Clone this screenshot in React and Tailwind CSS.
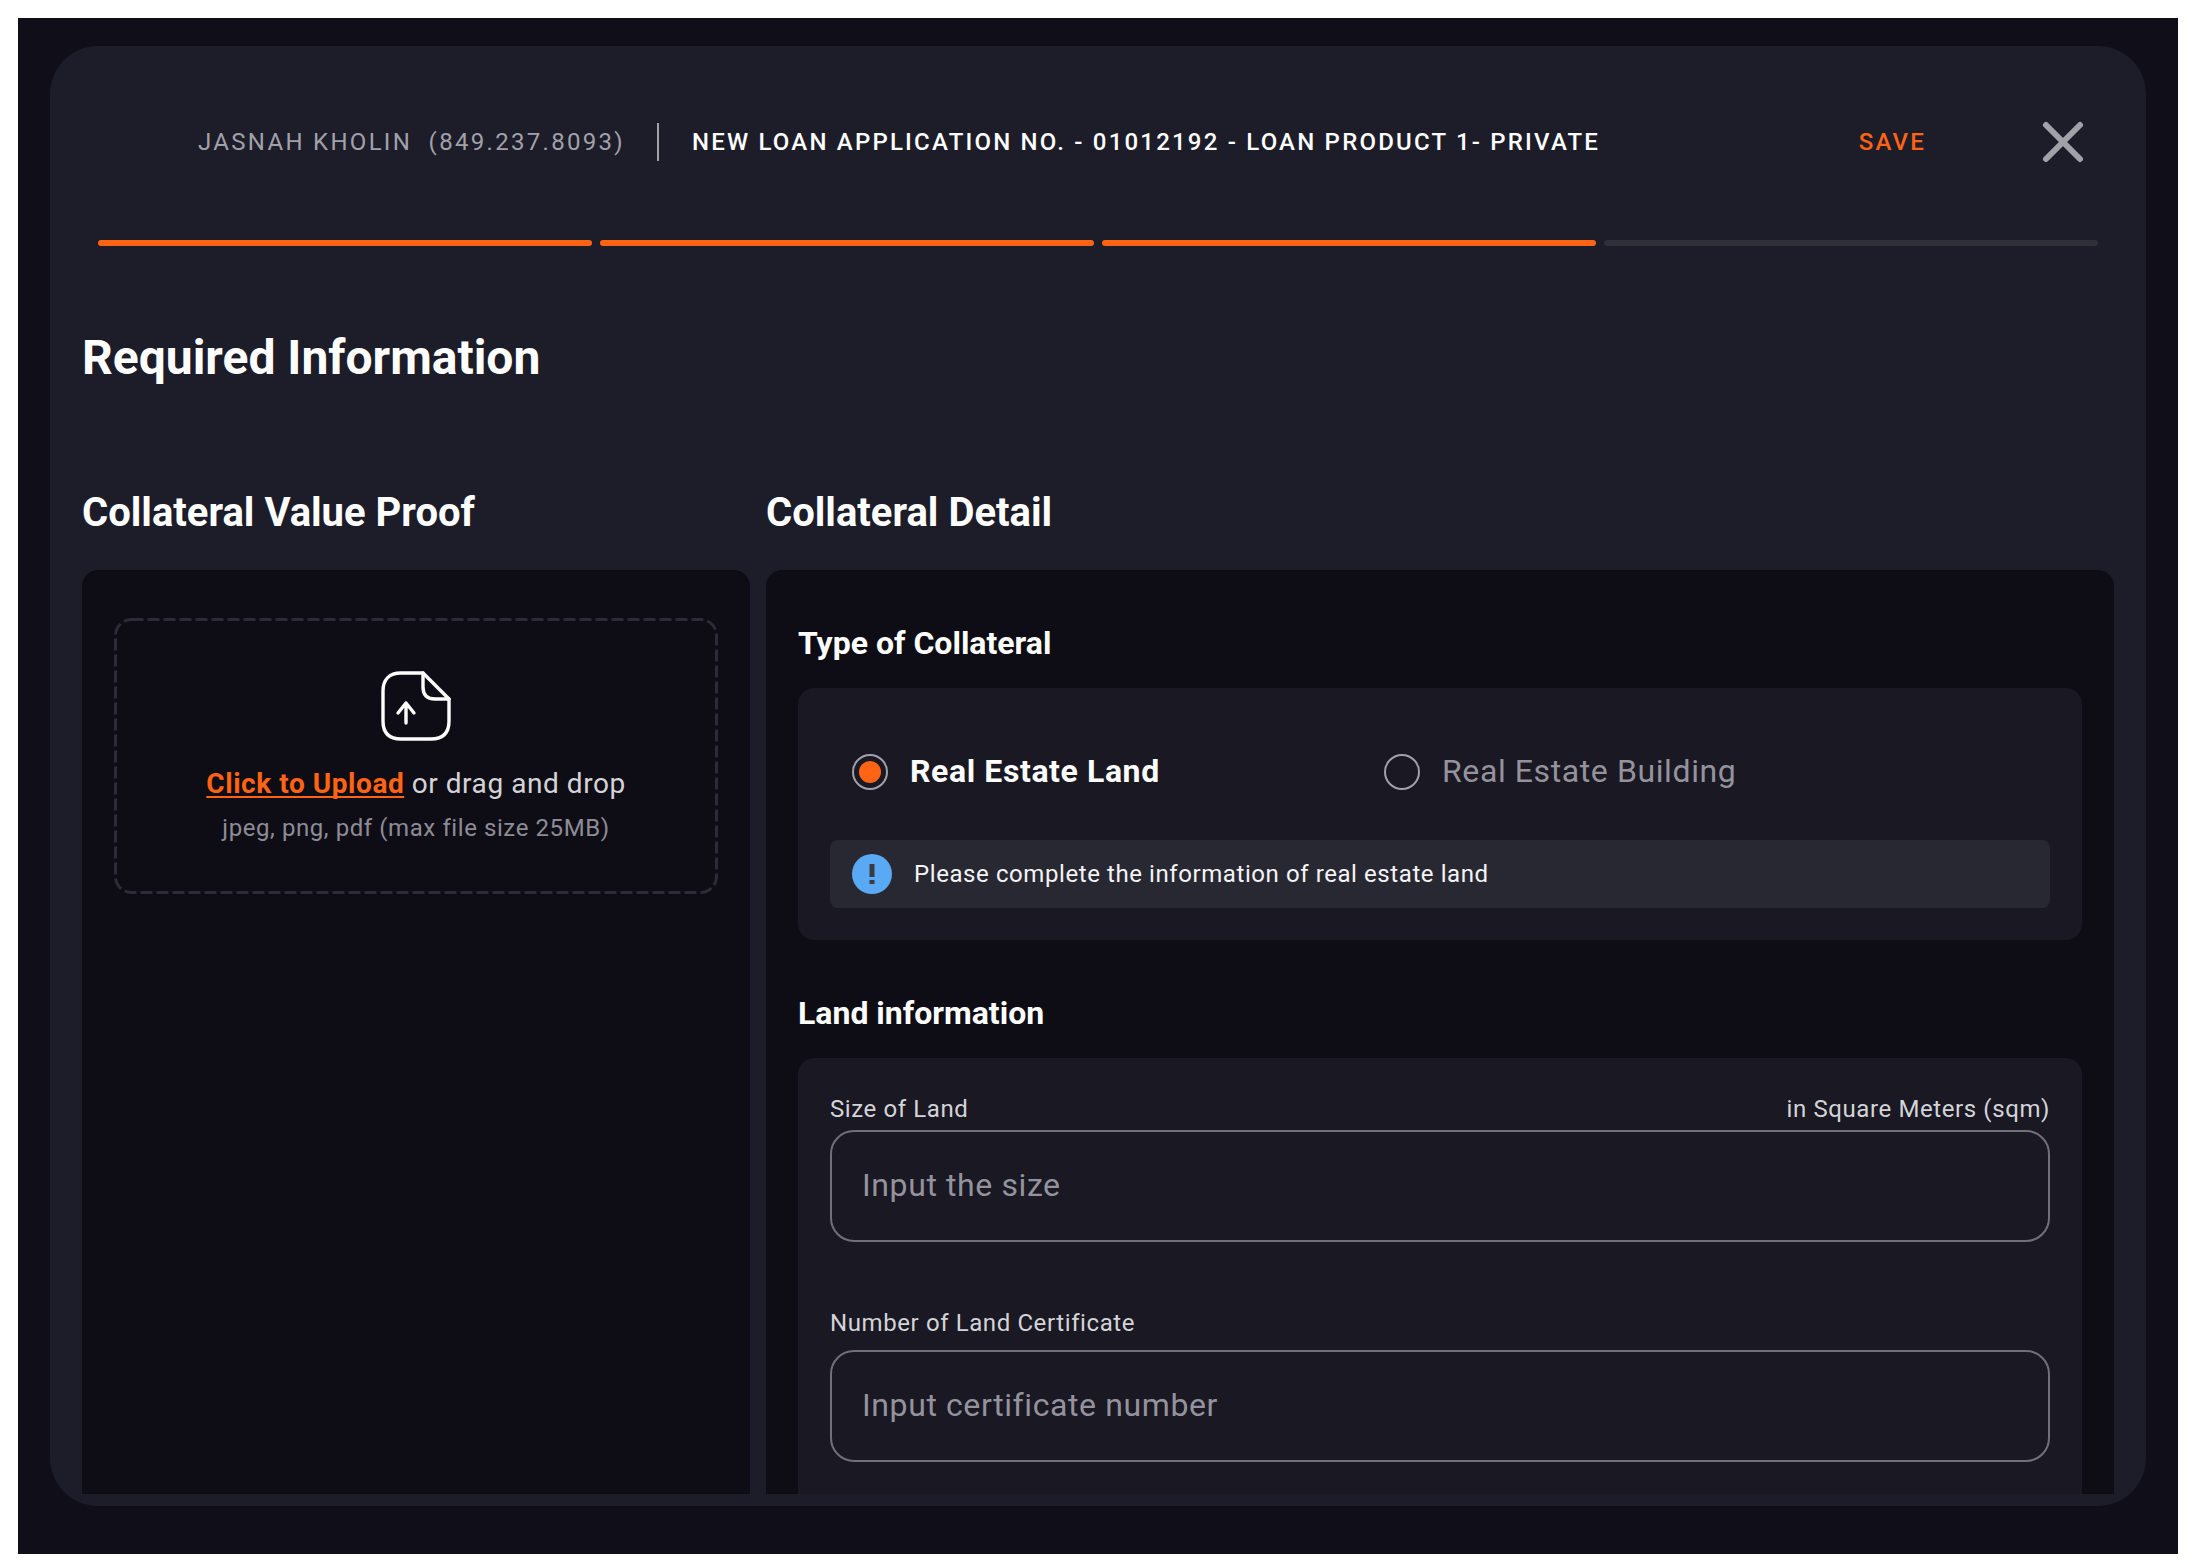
import React from 'react';

const Radio = ({ checked, label }) => (
  <div className="flex items-center gap-[22px]">
    <div className="w-9 h-9 rounded-full border-2 border-[#a1a1aa] flex items-center justify-center">
      {checked && <div className="w-[22px] h-[22px] rounded-full bg-[#ff6314]" />}
    </div>
    <span className={checked ? '-mt-[2px] text-[32px] leading-9 font-bold tracking-[0.6px] text-white' : '-mt-[2px] text-[32px] leading-9 tracking-[0.6px] text-[#94939d]'}>
      {label}
    </span>
  </div>
);

const Field = ({ label, hint, placeholder, labelClass }) => (
  <div>
    <div className={`flex justify-between items-center text-[24px] tracking-[0.6px] text-[#d4d4d8] ${labelClass}`}>
      <span>{label}</span>
      {hint && <span>{hint}</span>}
    </div>
    <div className="h-[112px] rounded-[24px] border-2 border-[#71707a] flex items-center px-[30px] pb-[2px] text-[32px] tracking-[0.6px] text-[#94939d]">
      {placeholder}
    </div>
  </div>
);

const App = () => {
  return (
    <div className="w-[2196px] h-[1560px] bg-white pt-[18px] pl-[18px] pr-[18px] pb-[6px] font-['Roboto',sans-serif]">
      <div className="h-full bg-[#100f19] pt-[28px] pl-[32px] pr-[32px] pb-[48px]">
        <div className="h-full bg-[#1d1c29] rounded-[48px] flex flex-col pb-[12px] px-[32px]">
          <div className="h-[204px] pt-[61px] flex items-start shrink-0">
            <div className="flex items-center h-[70px] w-full">
              <span className="ml-[116px] text-[24px] tracking-[2.3px] text-[#a1a1aa] whitespace-pre">JASNAH KHOLIN  (849.237.8093)</span>
              <div className="w-[2px] h-[38px] bg-[#a1a1aa] ml-[32px]" />
              <span className="ml-[33px] text-[24px] font-medium tracking-[2.2px] text-white">NEW LOAN APPLICATION NO. - 01012192 - LOAN PRODUCT 1- PRIVATE</span>
              <span className="ml-auto text-[24px] font-medium tracking-[2.2px] text-[#ff6314]">SAVE</span>
              <svg className="ml-[115px] mr-[29px]" width="44" height="44" viewBox="0 0 44 44" fill="none" stroke="#a1a1aa" strokeWidth="6" strokeLinecap="round">
                <path d="M5 5 L39 39 M39 5 L5 39" />
              </svg>
            </div>
          </div>
          <div className="flex gap-2 pl-[16px] pr-[16px] mt-[-10px] shrink-0">
            <div className="h-[6px] flex-1 rounded-full bg-[#ff6314]" />
            <div className="h-[6px] flex-1 rounded-full bg-[#ff6314]" />
            <div className="h-[6px] flex-1 rounded-full bg-[#ff6314]" />
            <div className="h-[6px] flex-1 rounded-full bg-[#2f2f39]" />
          </div>
          <h1 className="mt-[84px] text-[48px] leading-[56px] font-bold text-white shrink-0">Required Information</h1>
          <div className="flex gap-4 flex-1 min-h-0 mt-[103px]">
            <div className="w-[668px] flex flex-col min-h-0">
              <h2 className="text-[40px] leading-[48px] font-bold text-white">Collateral Value Proof</h2>
              <div className="mt-[33px] flex-1 bg-[#0e0d15] rounded-t-[16px] p-[32px] pt-[48px]">
                <div className="relative h-[276px] flex flex-col items-center pt-[53px]">
                  <svg className="absolute inset-0" width="604" height="276" viewBox="0 0 604 276" fill="none">
                    <rect x="1.5" y="1.5" width="601" height="273" rx="16" stroke="#2c2c37" strokeWidth="3" strokeDasharray="12 4" />
                  </svg>
                  <svg width="70" height="70" viewBox="0 0 70 70" fill="none" stroke="#ffffff" strokeWidth="3.4" strokeLinecap="round" strokeLinejoin="round">
                    <path d="M42 2 H20 C8 2 2 9 2 20 V50 C2 62 8 68 20 68 H50 C62 68 68 62 68 50 V28 Z" />
                    <path d="M42 2 V16 C42 24 46 28 54 28 H68" />
                    <path d="M25 52 V32 M17 42 L25 32 L33 42" />
                  </svg>
                  <div className="mt-[25px] text-[28px] leading-[36px] tracking-[0.55px] text-[#d4d4d8]">
                    <span className="font-bold text-[#ff6314] underline decoration-[2px] underline-offset-[3px] [text-decoration-skip-ink:none]">Click to Upload</span> or drag and drop
                  </div>
                  <div className="mt-[8px] text-[24px] leading-[36px] tracking-[0.58px] text-[#8d8c96]">jpeg, png, pdf (max file size 25MB)</div>
                </div>
              </div>
            </div>
            <div className="flex-1 flex flex-col min-h-0">
              <h2 className="text-[40px] leading-[48px] font-bold text-white">Collateral Detail</h2>
              <div className="mt-[33px] flex-1 min-h-0 overflow-hidden bg-[#0e0d15] rounded-t-[16px] px-[32px] pt-[55px]">
                <h3 className="text-[32px] leading-[36px] font-bold text-white">Type of Collateral</h3>
                <div className="mt-[27px] h-[252px] bg-[#191823] rounded-[16px] px-[32px] pt-[66px]">
                  <div className="flex pl-[22px]">
                    <div className="w-[532px]"><Radio checked label="Real Estate Land" /></div>
                    <Radio label="Real Estate Building" />
                  </div>
                  <div className="mt-[50px] h-[68px] rounded-[8px] bg-[#282833] flex items-center pl-[22px]">
                    <svg width="40" height="40" viewBox="0 0 40 40">
                      <circle cx="20" cy="20" r="20" fill="#5aa9f5" />
                      <rect x="17.5" y="10" width="5" height="13" fill="#3a3a44" />
                      <rect x="17.5" y="26" width="5" height="4" fill="#3a3a44" />
                    </svg>
                    <span className="ml-[22px] text-[24px] tracking-[0.58px] text-[#f4f4f5]">Please complete the information of real estate land</span>
                  </div>
                </div>
                <h3 className="mt-[55px] text-[32px] leading-[36px] font-bold text-white">Land information</h3>
                <div className="mt-[27px] bg-[#191823] rounded-t-[16px] px-[32px] pt-[32px] pb-[120px] flex flex-col gap-[62px]">
                  <Field label="Size of Land" hint="in Square Meters (sqm)" placeholder="Input the size" labelClass="h-[40px] pb-[2px]" />
                  <Field label="Number of Land Certificate" placeholder="Input certificate number" labelClass="h-[46px] pb-[8px]" />
                </div>
              </div>
            </div>
          </div>
        </div>
      </div>
    </div>
  );
};

export default App;
